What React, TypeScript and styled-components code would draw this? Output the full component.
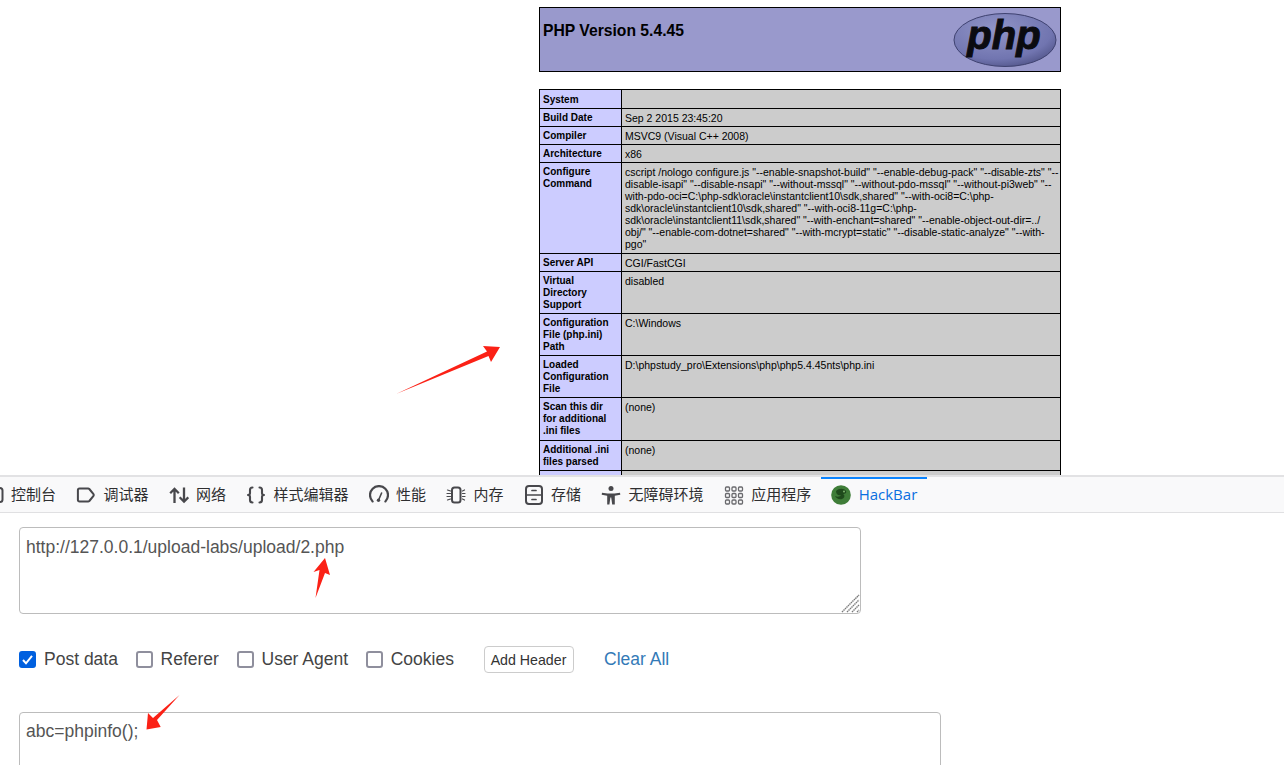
import React from "react";
import styled, { createGlobalStyle } from "styled-components";

const Global = createGlobalStyle`
  html, body { margin: 0; padding: 0; background: #fff; }
  body { font-family: "Liberation Sans", Arial, sans-serif; overflow: hidden; }
`;

const Page = styled.div`
  position: relative;
  width: 1284px;
  height: 765px;
  overflow: hidden;
  display: flex;
  flex-direction: column;
`;

const PhpView = styled.div`
  height: 475px;
  flex: none;
  overflow: hidden;
  padding: 7px 0 0 539px;
  box-sizing: border-box;
`;

const PhpHeader = styled.div`
  width: 522px;
  height: 65px;
  box-sizing: border-box;
  border: 1px solid #000;
  background: #9999cc;
  display: flex;
  justify-content: space-between;
  align-items: flex-start;
  padding: 5px 3px 0 3px;
`;

const Title = styled.h1`
  margin: 9px 0 0;
  font-size: 15.7px;
  line-height: 18px;
  font-weight: 700;
  color: #000;
`;

const LogoSvg = styled.svg`
  width: 104px;
  height: 54px;
  flex: none;
`;

const InfoTable = styled.table`
  width: 522px;
  margin-top: 17px;
  border-collapse: collapse;
  table-layout: fixed;
  font-size: 10.5px;
  line-height: 12px;
  color: #000;
  tr:first-child td { padding-top: 4px; }
`;

const Row = styled.tr<{ $h: number }>`
  height: ${(p) => p.$h}px;
`;

const LabelCell = styled.td`
  border: 1px solid #000;
  background: #ccccff;
  font-size: 10px;
  font-weight: 700;
  padding: 3px 8px 2px 3px;
  vertical-align: top;
  box-sizing: border-box;
`;

const ValueCell = styled.td`
  border: 1px solid #000;
  background: #cccccc;
  padding: 3px 0 2px 3px;
  vertical-align: top;
  box-sizing: border-box;
  white-space: nowrap;
`;

const TabBar = styled.div`
  height: 38px;
  flex: none;
  box-sizing: border-box;
  border-top: 2px solid #e2e2e4;
  border-bottom: 1px solid #e0e0e2;
  background: #f9f9fa;
  display: flex;
  align-items: stretch;
  overflow: hidden;
`;

const TabStrip = styled.div`
  display: flex;
  margin-left: -26.5px;
`;

const Tab = styled.div<{ $active?: boolean }>`
  display: flex;
  align-items: center;
  gap: 7.5px;
  padding: 0 10px 2px;
  font-family: "Noto Sans CJK SC", "Noto Sans", sans-serif;
  font-size: 15px;
  color: ${(p) => (p.$active ? "#0a6fe0" : "#2e2e30")};
  border-top: 2px solid ${(p) => (p.$active ? "#0a84ff" : "transparent")};
  box-sizing: border-box;
  white-space: nowrap;
`;

const TabLabel = styled.span`
  margin-top: -3px;
`;

const TabLatin = styled.span`
  font-family: "Open Sans", "Noto Sans", sans-serif;
  font-size: 15px;
  margin-top: -1px;
`;

const TabIcon = styled.svg`
  width: 20px;
  height: 20px;
  flex: none;
  fill: none;
  stroke: #48484c;
  stroke-width: 2;
  stroke-linecap: round;
  stroke-linejoin: round;
`;

const Panel = styled.div`
  flex: 1;
  min-height: 0;
  padding: 14px 0 0 19px;
  background: #fff;
  display: flex;
  flex-direction: column;
`;

const AreaWrap = styled.div<{ $w: number; $h: number }>`
  position: relative;
  width: ${(p) => p.$w}px;
  height: ${(p) => p.$h}px;
  flex: none;
`;

const Area = styled.textarea<{ $top: number }>`
  display: block;
  width: 100%;
  height: 100%;
  box-sizing: border-box;
  border: 1px solid #bcbcbc;
  border-radius: 4px;
  padding: ${(p) => p.$top}px 6px 8px;
  margin: 0;
  resize: none;
  outline: none;
  background: #fff;
  font-family: "Liberation Sans", Arial, sans-serif;
  font-size: 17.5px;
  line-height: 22px;
  color: #555;
`;

const Grip = styled.svg`
  position: absolute;
  right: 1px;
  bottom: 1px;
  width: 19px;
  height: 19px;
`;

const Controls = styled.div`
  display: flex;
  align-items: center;
  height: 27px;
  margin-top: 32px;
  flex: none;
`;

const Check = styled.label`
  display: flex;
  align-items: center;
  gap: 8px;
  margin-right: 17.6px;
  font-size: 17.5px;
  color: #444;
`;

const Box = styled.span<{ $on?: boolean }>`
  width: 17px;
  height: 17px;
  box-sizing: border-box;
  border-radius: 3px;
  border: 2px solid ${(p) => (p.$on ? "#0060df" : "#8f8f9d")};
  background: ${(p) => (p.$on ? "#0060df" : "#fff")};
  display: flex;
  align-items: center;
  justify-content: center;
  flex: none;
`;

const AddHeader = styled.button`
  width: 90px;
  height: 27px;
  margin-left: 12px;
  padding: 0;
  box-sizing: border-box;
  border: 1px solid #ccc;
  border-radius: 4px;
  background: #fff;
  font-family: "Liberation Sans", Arial, sans-serif;
  font-size: 14.2px;
  color: #333;
`;

const ClearAll = styled.a`
  margin-left: 30.6px;
  font-size: 17.5px;
  color: #337ab7;
  text-decoration: none;
`;

const PostWrap = styled.div`
  margin-top: 39px;
  flex: none;
`;

const Arrows = styled.svg`
  position: absolute;
  left: 0;
  top: 0;
  width: 1284px;
  height: 765px;
  pointer-events: none;
`;

const rows: { h: number; label: React.ReactNode; value: React.ReactNode }[] = [
  { h: 19, label: "System", value: "" },
  { h: 18, label: "Build Date", value: "Sep 2 2015 23:45:20" },
  { h: 18, label: "Compiler", value: "MSVC9 (Visual C++ 2008)" },
  { h: 18, label: "Architecture", value: "x86" },
  {
    h: 91,
    label: "Configure Command",
    value: (
      <>
        cscript /nologo configure.js "--enable-snapshot-build" "--enable-debug-pack" "--disable-zts" "--
        <br />
        disable-isapi" "--disable-nsapi" "--without-mssql" "--without-pdo-mssql" "--without-pi3web" "--
        <br />
        with-pdo-oci=C:\php-sdk\oracle\instantclient10\sdk,shared" "--with-oci8=C:\php-
        <br />
        sdk\oracle\instantclient10\sdk,shared" "--with-oci8-11g=C:\php-
        <br />
        sdk\oracle\instantclient11\sdk,shared" "--with-enchant=shared" "--enable-object-out-dir=../
        <br />
        obj/" "--enable-com-dotnet=shared" "--with-mcrypt=static" "--disable-static-analyze" "--with-
        <br />
        pgo"
      </>
    ),
  },
  { h: 18, label: "Server API", value: "CGI/FastCGI" },
  { h: 42, label: "Virtual Directory Support", value: "disabled" },
  { h: 42, label: "Configuration File (php.ini) Path", value: "C:\\Windows" },
  { h: 42, label: "Loaded Configuration File", value: "D:\\phpstudy_pro\\Extensions\\php\\php5.4.45nts\\php.ini" },
  { h: 43, label: "Scan this dir for additional .ini files", value: "(none)" },
  { h: 30, label: "Additional .ini files parsed", value: "(none)" },
  { h: 18, label: "", value: "" },
];

const tabs: { label: string; icon: React.ReactNode }[] = [
  { label: "控制台", icon: <rect x="9" y="3" width="9.500" height="14" rx="2.500" /> },
  { label: "调试器", icon: <path d="M3.500 3.500h8.600c.5 0 .9.2 1.200.5l4.200 5.200c.4.5.4 1.100 0 1.600l-4.200 5.200c-.3.3-.7.5-1.200.5H3.500c-1 0-1.600-.7-1.600-1.600V5.100c0-.9.6-1.600 1.600-1.600z" /> },
  {
    label: "网络",
    icon: (
      <g strokeWidth="2.300" strokeLinecap="butt" strokeLinejoin="miter">
        <path d="M5.500 18V4M1.200 8.200l4.300-4.400 4.300 4.400" />
        <path d="M15 2.500v14M10.700 12.300l4.300 4.400 4.300-4.400" />
      </g>
    ),
  },
  {
    label: "样式编辑器",
    icon: (
      <g strokeWidth="2.100">
        <path d="M6.500 2.500C4.500 2.500 4 3.500 4 5v3c0 1.200-.8 2-2 2 1.200 0 2 .8 2 2v3c0 1.500.5 2.500 2.500 2.500" />
        <path d="M13.500 2.500c2 0 2.500 1 2.500 2.500v3c0 1.200.8 2 2 2-1.200 0-2 .8-2 2v3c0 1.500-.5 2.500-2.500 2.500" />
      </g>
    ),
  },
  {
    label: "性能",
    icon: (
      <g>
        <path d="M3.600 16.400A9 9 0 1 1 16.400 16.400" strokeWidth="2.200" />
        <path d="M9.600 15L12.600 8" strokeWidth="1.600" />
        <circle cx="9.500" cy="15.200" r="1.700" fill="#48484c" stroke="none" />
      </g>
    ),
  },
  {
    label: "内存",
    icon: (
      <g>
        <rect x="6" y="2.500" width="8.500" height="15" rx="2.500" strokeWidth="2" />
        <path d="M1.500 5l3 1M1 8.500h3.500M1 11.500h3.500M1.500 15l3-1M16.500 6l2-1M16.500 8.500H19M16.500 11.500H19M16.500 14l2 1" strokeWidth="1.200" />
      </g>
    ),
  },
  {
    label: "存储",
    icon: (
      <g>
        <rect x="2" y="1" width="16" height="18" rx="3" strokeWidth="2" />
        <path d="M2 10h16M8 5.500h4M8 14.500h4" strokeWidth="1.700" />
      </g>
    ),
  },
  {
    label: "无障碍环境",
    icon: (
      <g>
        <circle cx="10" cy="3.500" r="2.500" fill="#48484c" stroke="none" />
        <path d="M1 7.800l5.500 .7h7l5.500-.7.300 1.900-5.500 1.100V19.500h-2.600l-1-7h-.8l-1 7H6.200v-8.700l-5.500-1.100z" fill="#48484c" stroke="none" />
      </g>
    ),
  },
  {
    label: "应用程序",
    icon: (
      <g strokeWidth="1.300" stroke="#6a6a6e">
        {[2, 8.5, 15].map((y) =>
          [1.5, 8, 14.5].map((x) => <rect key={`${x}-${y}`} x={x} y={y} width="4" height="4" rx="1" />)
        )}
      </g>
    ),
  },
];

export default function App() {
  return (
    <Page>
      <Global />
      <PhpView>
        <PhpHeader>
          <Title>PHP Version 5.4.45</Title>
          <LogoSvg viewBox="0 0 104 54">
            <defs>
              <radialGradient id="phpG" cx="0.4" cy="0.3" r="0.8">
                <stop offset="0" stopColor="#9195c8" />
                <stop offset="0.7" stopColor="#7175b0" />
                <stop offset="1" stopColor="#4a4d80" />
              </radialGradient>
            </defs>
            <ellipse cx="52" cy="27" rx="51" ry="26.500" fill="url(#phpG)" stroke="#3f4270" strokeWidth="1" />
            <text
              x="51"
              y="35.500"
              textAnchor="middle"
              fontFamily="'Liberation Sans', Arial, sans-serif"
              fontSize="40"
              fontWeight="700"
              fontStyle="italic"
              fill="#0b0b10"
              stroke="#0b0b10"
              strokeWidth="1"
            >
              php
            </text>
          </LogoSvg>
        </PhpHeader>
        <InfoTable>
          <colgroup>
            <col style={{ width: 82 }} />
            <col />
          </colgroup>
          <tbody>
            {rows.map((r, i) => (
              <Row key={i} $h={r.h}>
                <LabelCell>{r.label}</LabelCell>
                <ValueCell>{r.value}</ValueCell>
              </Row>
            ))}
          </tbody>
        </InfoTable>
      </PhpView>
      <TabBar>
        <TabStrip>
          {tabs.map((t) => (
            <Tab key={t.label}>
              <TabIcon viewBox="0 0 20 20">{t.icon}</TabIcon>
              <TabLabel>{t.label}</TabLabel>
            </Tab>
          ))}
          <Tab $active>
            <svg width="20" height="20" viewBox="0 0 20 20">
              <circle cx="10" cy="10" r="9.800" fill="#3f7d38" />
              <path d="M5 6c3-3 8-3 10 0 1 2-1 3-3 3 2 1 2 4-1 5-3 1-6-1-7-3 2 1 5 1 6-1-2 1-5 0-5-4z" fill="#1f4a1c" />
              <circle cx="13" cy="6.500" r="1" fill="#7fb56f" />
            </svg>
            <TabLatin>HackBar</TabLatin>
          </Tab>
        </TabStrip>
      </TabBar>
      <Panel>
        <AreaWrap $w={842} $h={87}>
          <Area $top={8} readOnly defaultValue="http://127.0.0.1/upload-labs/upload/2.php" />
          <Grip viewBox="0 0 19 19">
            <path
              d="M1 18L18 1M6 18L18 6M11 18l7-7M16 18l2-2"
              stroke="#7a7a7a"
              strokeWidth="1.400"
              strokeDasharray="1.500 .6"
              fill="none"
            />
          </Grip>
        </AreaWrap>
        <Controls>
          <Check>
            <Box $on>
              <svg width="13" height="13" viewBox="0 0 13 13">
                <path d="M2 7l3 3.300L11 2.800" stroke="#fff" strokeWidth="2" fill="none" />
              </svg>
            </Box>
            Post data
          </Check>
          <Check>
            <Box />
            Referer
          </Check>
          <Check>
            <Box />
            User Agent
          </Check>
          <Check>
            <Box />
            Cookies
          </Check>
          <AddHeader>Add Header</AddHeader>
          <ClearAll>Clear All</ClearAll>
        </Controls>
        <PostWrap>
          <AreaWrap $w={922} $h={120}>
            <Area $top={7} readOnly defaultValue="abc=phpinfo();" />
          </AreaWrap>
        </PostWrap>
      </Panel>
      <Arrows viewBox="0 0 1284 765">
        <polygon points="396,394 487,351.500 483,346 500,347 491,362 488.500,356" fill="#fb2116" />
        <polygon points="315.500,598 319.500,570 313.500,572 325,558 330,575 325,573" fill="#fb2116" />
        <polygon points="179.500,695 157,720 160.700,727 146.500,729.500 148,713 153,718" fill="#fb2116" />
      </Arrows>
    </Page>
  );
}
